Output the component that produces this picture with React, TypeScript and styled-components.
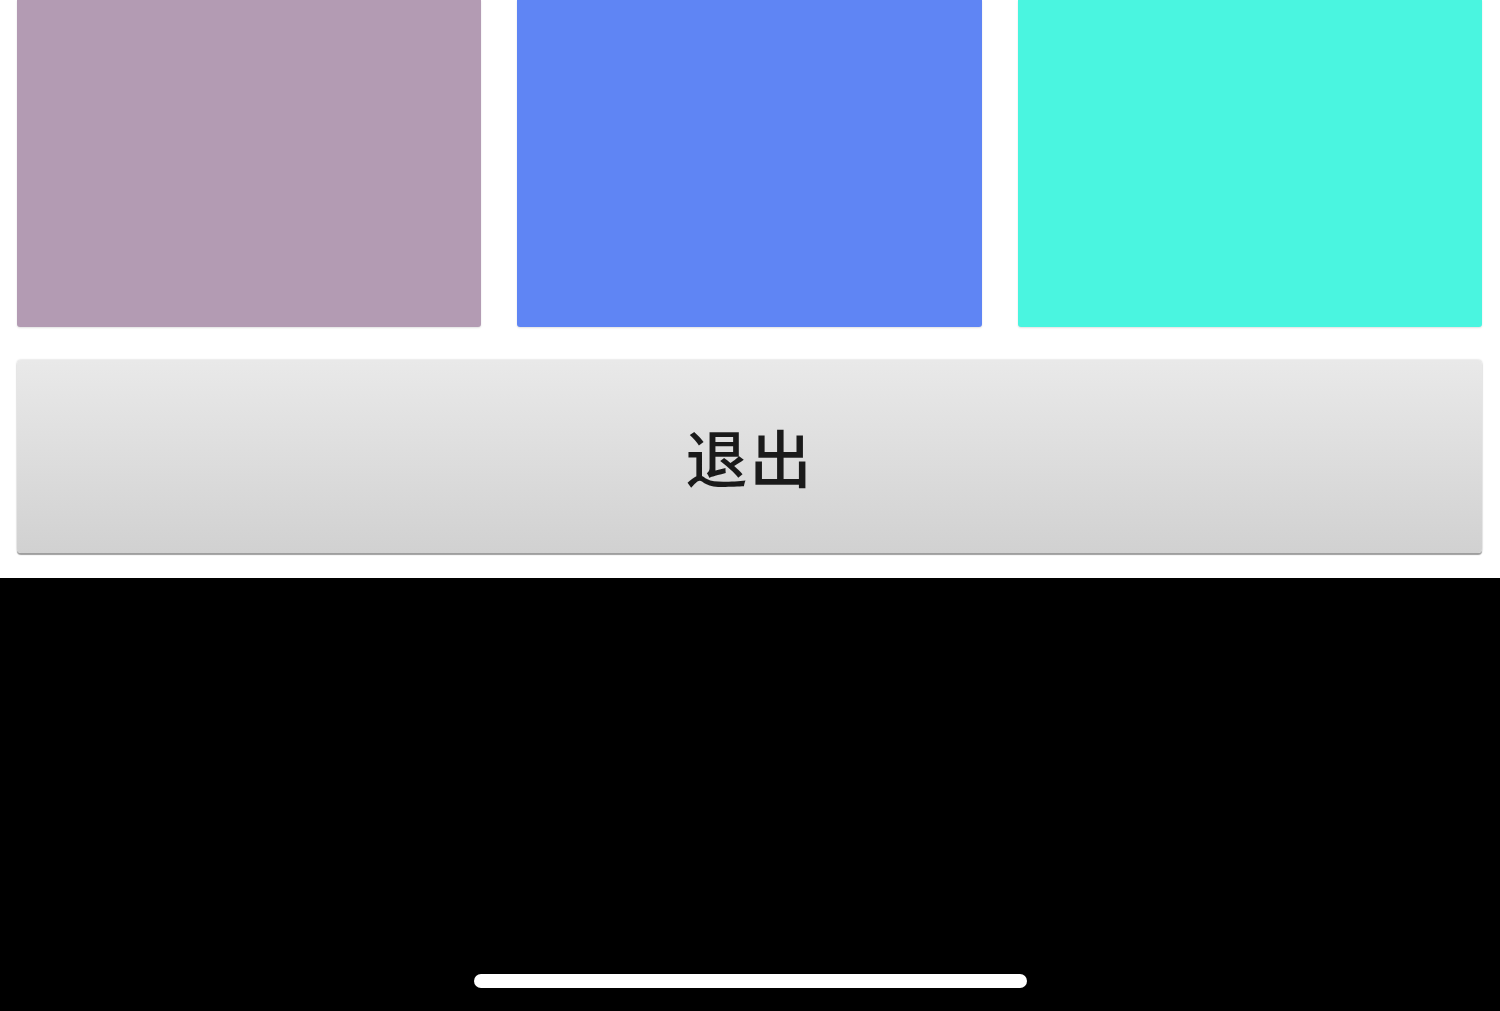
import React from 'react';
import styled, { createGlobalStyle } from 'styled-components';

const GlobalStyle = createGlobalStyle`
  html, body {
    margin: 0;
    padding: 0;
    background: #ffffff;
  }
`;

const tiles = ['#b39bb3', '#5f85f4', '#4af5e0'];

const App = () => (
  <>
    <GlobalStyle />
    <SPage>
      <SContent>
        <STileRow>
          {tiles.map((color) => (
            <STile key={color} color={color} />
          ))}
        </STileRow>
        <SExitButton type="button">退出</SExitButton>
      </SContent>
      <SHomeArea>
        <SHomeIndicator />
      </SHomeArea>
    </SPage>
  </>
);

const SPage = styled.div`
  width: 1500px;
  height: 1011px;
  display: flex;
  flex-direction: column;
  overflow: hidden;
  background: #ffffff;
`;

const SContent = styled.div`
  display: flex;
  flex-direction: column;
  gap: 33px;
  padding: 0 18px 25px 17px;
`;

const STileRow = styled.div`
  display: grid;
  grid-template-columns: repeat(3, 1fr);
  gap: 36px;
`;

const STile = styled.div<{ color: string }>`
  height: 327px;
  background: ${({ color }) => color};
  border-radius: 0 0 3px 3px;
  box-shadow: 0 1px 2px rgba(0, 0, 0, 0.12);
`;

const SExitButton = styled.button`
  height: 193px;
  width: 100%;
  border: none;
  border-radius: 4px;
  background: linear-gradient(180deg, #e9e9e9 0%, #dcdcdc 55%, #d1d1d1 100%);
  box-shadow: 0 2px 1px #9e9e9e, 0 0 2px rgba(0, 0, 0, 0.25);
  color: #1a1a1a;
  font-family: 'Noto Sans CJK SC', 'Noto Sans', sans-serif;
  font-size: 62px;
  font-weight: 500;
  letter-spacing: 2px;
  padding: 0 0 2px 0;
  cursor: pointer;
`;

const SHomeArea = styled.div`
  flex: 1;
  background: #000000;
  display: flex;
  align-items: flex-end;
  justify-content: center;
  padding-bottom: 23px;
`;

const SHomeIndicator = styled.div`
  width: 553px;
  height: 14px;
  border-radius: 7px;
  background: #ffffff;
`;

export default App;
